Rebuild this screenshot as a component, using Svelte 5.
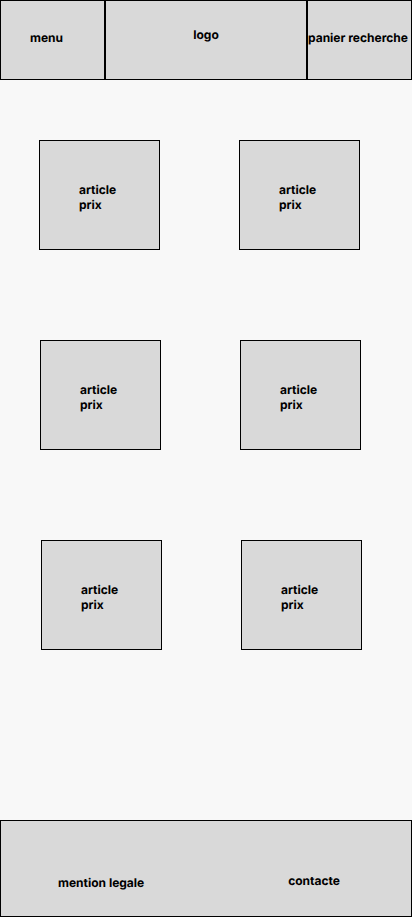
<script>
  const rows = [
    [1, 2],
    [3, 4],
    [5, 6],
  ];
</script>

<div class="page">
  <header>
    <button class="menu" type="button">menu</button>
    <a class="logo" href="#accueil">logo</a>
    <nav aria-label="Outils">
      <a href="#panier">panier</a>
      <a href="#recherche">recherche</a>
    </nav>
  </header>

  <main>
    {#each rows as row, i}
      <div class="row" style:--shift="{i}px">
        {#each row as id}
          <a class="card" href="#article-{id}">
            <span>article</span>
            <span>prix</span>
          </a>
        {/each}
      </div>
    {/each}
  </main>

  <footer>
    <a class="legal" href="#mentions">mention legale</a>
    <a class="contact" href="#contact">contacte</a>
  </footer>
</div>

<style>
  :global(body) {
    background: #f8f8f8;
  }

  .page {
    box-sizing: border-box;
    min-height: 100vh;
    display: flex;
    flex-direction: column;
    font-family: Inter, "Liberation Sans", sans-serif;
    font-size: 12px;
    font-weight: 700;
    line-height: 15px;
    text-rendering: geometricPrecision;
    color: #000;
  }

  a {
    color: inherit;
    text-decoration: none;
  }

  header {
    display: grid;
    grid-template-columns: 105fr 202fr 105fr;
  }

  header > * {
    box-sizing: border-box;
    height: 80px;
    border: 1px solid #000;
    background: #d9d9d9;
  }

  .menu {
    display: block;
    margin: 0;
    padding: 28px 28px 34px 29px;
    border-radius: 0;
    font: inherit;
    color: inherit;
    text-align: left;
    text-rendering: inherit;
    cursor: pointer;
  }

  .logo {
    padding-top: 26px;
    text-align: center;
  }

  nav {
    padding-top: 29px;
    white-space: nowrap;
  }

  main {
    display: flex;
    flex-direction: column;
    gap: 90px;
    padding: 60px 0;
  }

  .row {
    display: grid;
    grid-template-columns: 121px 121px;
    column-gap: 79px;
    justify-content: center;
    padding-left: calc(2 * var(--shift));
    padding-right: 13px;
  }

  .card {
    box-sizing: border-box;
    height: 110px;
    display: flex;
    flex-direction: column;
    padding: 41px 0 0 39px;
    border: 1px solid #000;
    background: #d9d9d9;
  }

  footer {
    box-sizing: border-box;
    min-height: 97px;
    margin-top: auto;
    display: flex;
    justify-content: space-between;
    align-items: flex-start;
    padding: 52px 71px 0 57px;
    border: 1px solid #000;
    background: #d9d9d9;
  }

  .legal {
    padding-top: 2px;
  }
</style>
